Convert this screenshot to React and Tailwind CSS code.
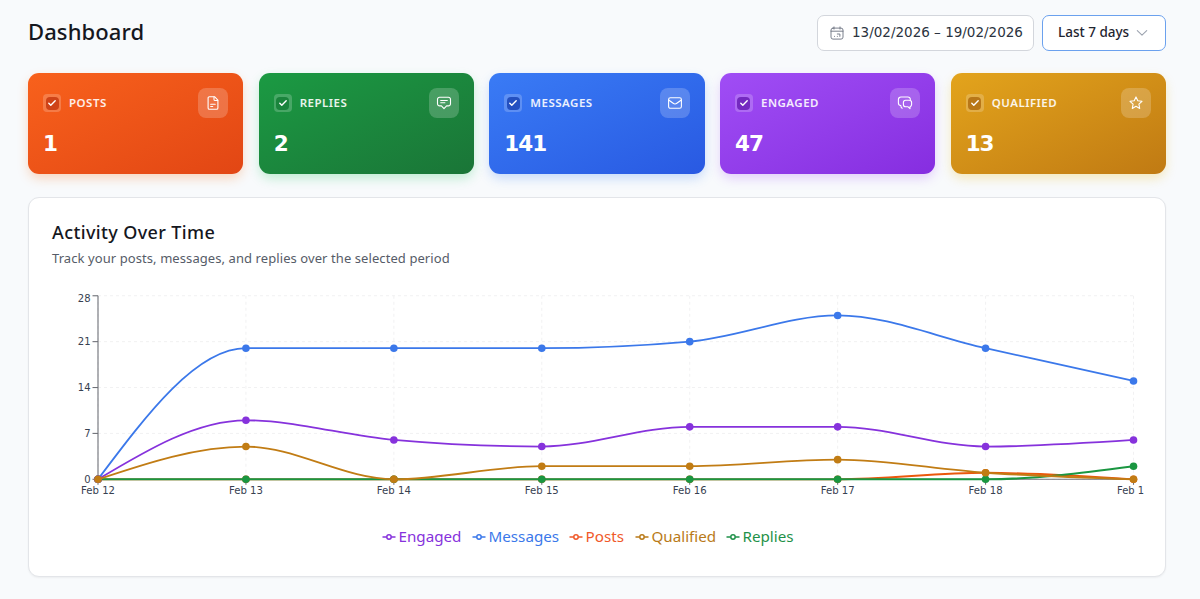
import React from 'react';
import clsx from 'clsx';

const stats = [
  { label: 'Posts', value: '1', icon: 'file', card: 'from-[#f8611c] to-[#e24614] shadow-[#f9731648]', check: 'bg-[#cf4318]' },
  { label: 'Replies', value: '2', icon: 'reply', card: 'from-[#1b9a43] to-[#1a7537] shadow-[#22c55e48]', check: 'bg-[#1a843c]' },
  { label: 'Messages', value: '141', icon: 'mail', card: 'from-[#3a7bf5] to-[#2959e2] shadow-[#3b82f648]', check: 'bg-[#2450c0]' },
  { label: 'Engaged', value: '47', icon: 'chats', card: 'from-[#a04df5] to-[#862de0] shadow-[#a855f748]', check: 'bg-[#7429c0]' },
  { label: 'Qualified', value: '13', icon: 'star', card: 'from-[#e3a41c] to-[#c07a13] shadow-[#eab30848]', check: 'bg-[#b87718]' },
];

const series = [
  { name: 'Posts', color: '#ea580c', data: [0, 0, 0, 0, 0, 0, 1, 0] },
  { name: 'Replies', color: '#1a9641', data: [0, 0, 0, 0, 0, 0, 0, 2] },
  { name: 'Messages', color: '#3b78ea', data: [0, 20, 20, 20, 21, 25, 20, 15] },
  { name: 'Engaged', color: '#8632dc', data: [0, 9, 6, 5, 8, 8, 5, 6] },
  { name: 'Qualified', color: '#c17c14', data: [0, 5, 0, 2, 2, 3, 1, 0] },
];

const legend = [
  { name: 'Engaged', color: '#8632dc', width: 63.5 },
  { name: 'Messages', color: '#3b78ea', width: 70.5 },
  { name: 'Posts', color: '#f0592a', width: 39.5 },
  { name: 'Qualified', color: '#b97a18', width: 64.5 },
  { name: 'Replies', color: '#1f9149', width: 52 },
];

const days = ['Feb 12', 'Feb 13', 'Feb 14', 'Feb 15', 'Feb 16', 'Feb 17', 'Feb 18', 'Feb 1'];
const ticks = [0, 7, 14, 21, 28];

const LEFT = 46;
const STEP = 147.93;
const BASE = 199.3;
const UNIT = 6.555;

const px = (i) => LEFT + i * STEP;
const py = (v) => BASE - v * UNIT;

// Monotone cubic interpolation through evenly spaced points
function monotonePath(values) {
  const n = values.length;
  const ys = values.map(py);
  const slopes = ys.slice(1).map((y, i) => (y - ys[i]) / STEP);
  const t = new Array(n).fill(0);
  for (let i = 1; i < n - 1; i++) {
    const a = slopes[i - 1];
    const b = slopes[i];
    t[i] = (Math.sign(a) + Math.sign(b)) * Math.min(Math.abs(a), Math.abs(b), 0.25 * Math.abs(a + b)) || 0;
  }
  t[0] = (3 * slopes[0] - t[1]) / 2;
  t[n - 1] = (3 * slopes[n - 2] - t[n - 2]) / 2;
  let d = `M${px(0)},${ys[0]}`;
  const k = STEP / 3;
  for (let i = 1; i < n; i++) {
    d += `C${px(i - 1) + k},${ys[i - 1] + k * t[i - 1]},${px(i) - k},${ys[i] - k * t[i]},${px(i)},${ys[i]}`;
  }
  return d;
}

function StatIcon({ name }) {
  return (
    <svg viewBox="0 0 16 16" className="w-4 h-4" fill="none" stroke="currentColor" strokeWidth="1.1" strokeLinecap="round" strokeLinejoin="round">
      {name === 'file' && (
        <>
          <path d="M9.5 1.7H4.4a1.3 1.3 0 0 0-1.3 1.3v10a1.3 1.3 0 0 0 1.3 1.3h7.2a1.3 1.3 0 0 0 1.3-1.3V5.2L9.5 1.7Z" />
          <path d="M9 2v2.4a1.1 1.1 0 0 0 1.1 1.1h2.6M5.7 9.3h4.5M5.7 11.5h2" />
        </>
      )}
      {name === 'reply' && (
        <>
          <path d="M3.6 2.3h8.8a2.1 2.1 0 0 1 2.1 2.1v4.4a2.1 2.1 0 0 1-2.1 2.1h-1.8L8 13.7l-2.6-2.8H3.6a2.1 2.1 0 0 1-2.1-2.1V4.4a2.1 2.1 0 0 1 2.1-2.1Z" />
          <path d="M4.7 5.5h6.6M4.7 7.8h4.2" />
        </>
      )}
      {name === 'mail' && (
        <>
          <rect x="1.6" y="2.7" width="12.8" height="10.6" rx="1.8" />
          <path d="M2 5.2l4.2 3.1a3 3 0 0 0 3.6 0L14 5.2" />
        </>
      )}
      {name === 'chats' && (
        <>
          <path d="M5.3 13.2c-1-.3-1.5-1.2-1.5-2.6a2.6 2.6 0 0 1-2.4-2.6V4.6A2.6 2.6 0 0 1 4 2h6.8a2.6 2.6 0 0 1 2.6 2.4" />
          <path d="M8.7 5.3h3.6a2.3 2.3 0 0 1 2.3 2.3v1.9a2.3 2.3 0 0 1-1.6 2.2v1.9l-1.9-1.8H8.7a2.3 2.3 0 0 1-2.3-2.3V7.6a2.3 2.3 0 0 1 2.3-2.3Z" />
        </>
      )}
      {name === 'star' && <path d="M8 1.9l1.8 3.9 4.2.5-3.1 2.9.8 4.2L8 11.3l-3.7 2.1.8-4.2L2 6.3l4.2-.5L8 1.9Z" />}
    </svg>
  );
}

function StatCard({ stat }) {
  return (
    <div className={clsx('h-[101px] rounded-[11px] bg-linear-to-br px-[15px] pt-[15px] text-white shadow-[0_5px_12px_-1px]', stat.card)}>
      <div className="flex items-center justify-between">
        <div className="flex items-center gap-2">
          <div className="flex h-[18px] w-[18px] items-center justify-center rounded-[4px] bg-white/20">
            <div className={clsx('flex h-[13px] w-[13px] items-center justify-center rounded-[4px]', stat.check)}>
              <svg viewBox="0 0 10 10" className="h-[10px] w-[10px]" fill="none" stroke="white" strokeWidth="1.4" strokeLinecap="round" strokeLinejoin="round">
                <path d="M1.8 5.2l2 2L8.2 2.8" />
              </svg>
            </div>
          </div>
          <span className="text-[11.5px] leading-4 font-semibold tracking-[0.5px] uppercase text-white/90">{stat.label}</span>
        </div>
        <div className="flex h-[30px] w-[30px] items-center justify-center rounded-lg bg-white/20">
          <StatIcon name={stat.icon} />
        </div>
      </div>
      <p className="mt-[11px] font-['DejaVu_Sans'] text-[21.5px] leading-[30px] font-bold tracking-[-1px]">{stat.value}</p>
    </div>
  );
}

function ActivityChart() {
  return (
    <svg viewBox="0 0 1092 230" className="block h-[230px] w-[1092px]">
      <g stroke="#f1f1f2" strokeDasharray="3 3">
        {ticks.map((v) => <line key={v} x1={LEFT} x2={px(7)} y1={py(v)} y2={py(v)} />)}
        {days.map((d, i) => <line key={d} x1={px(i)} x2={px(i)} y1={py(28)} y2={BASE} />)}
      </g>
      <g stroke="#6f7178" strokeWidth="1.1">
        <line x1={LEFT} x2={px(7)} y1={BASE} y2={BASE} />
        <line x1={LEFT} x2={LEFT} y1={py(28)} y2={BASE} />
        {ticks.map((v) => <line key={v} x1={LEFT - 5.5} x2={LEFT} y1={py(v)} y2={py(v)} />)}
        {days.map((d, i) => <line key={d} x1={px(i)} x2={px(i)} y1={BASE} y2={BASE + 5.5} />)}
      </g>
      <g className="font-['DejaVu_Sans']" fill="#374151" fontSize="10">
        {ticks.map((v) => (
          <text key={v} x={LEFT - 7.5} y={py(v) + (v === 28 ? 6.5 : 3.7)} textAnchor="end">{v}</text>
        ))}
        {days.map((d, i) => (
          <text key={d} x={i === 7 ? 1065 : px(i) - 17} y="214" textLength={i === 7 ? 27 : 34} lengthAdjust="spacingAndGlyphs">{d}</text>
        ))}
      </g>
      {series.map((s) => (
        <g key={s.name}>
          <path d={monotonePath(s.data)} fill="none" stroke={s.color} strokeWidth={s.name === 'Replies' ? 2.1 : 1.8} />
          {s.data.map((v, i) => <circle key={i} cx={px(i)} cy={py(v)} r="3.8" fill={s.color} />)}
        </g>
      ))}
    </svg>
  );
}

export default function App() {
  return (
    <div className="h-[599px] overflow-hidden bg-[#f8fafc] px-7 pt-[15px] font-['Noto_Sans',sans-serif] text-[#15171e]">
      <header className="flex h-9 items-center justify-between pr-[6px]">
        <h1 className="pb-[5px] text-[22px] leading-8 font-medium tracking-[0.1px]">Dashboard</h1>
        <div className="flex gap-2">
          <div className="flex h-9 w-[217px] items-center rounded-[7px] border border-[#d3d6dc] bg-white pl-3">
            <svg viewBox="0 0 14 14" className="mr-2 h-[14px] w-[14px] shrink-0" fill="none" stroke="#6b7280" strokeWidth="0.9" strokeLinecap="round">
              <rect x="1" y="2.1" width="12" height="11" rx="2" />
              <path d="M1 5.2h12M4 .9v2.2M10 .9v2.2M7.3 8h2.6v1.6M4.5 10.4h.1M7.3 10.4h.1M9.8 10.4h.1" />
            </svg>
            <span className="pb-[2px] font-['DejaVu_Sans'] text-[13.5px] whitespace-nowrap text-[#2b3340]">13/02/2026 – 19/02/2026</span>
          </div>
          <div className="flex h-9 w-[124px] items-center justify-between rounded-[7px] border border-[#6ba1ee] bg-white pr-[17px] pl-[15px]">
            <span className="pb-[2px] text-[13.5px] font-medium whitespace-nowrap text-[#1f2530]">Last 7 days</span>
            <svg viewBox="0 0 12 8" className="h-2 w-3" fill="none" stroke="#9ca3af" strokeWidth="1.1" strokeLinecap="round" strokeLinejoin="round">
              <path d="M1.3 1.7L6 6.2l4.7-4.5" />
            </svg>
          </div>
        </div>
      </header>

      <section className="mt-[22px] mr-[6px] grid grid-cols-5 gap-[15.3px]">
        {stats.map((stat) => <StatCard key={stat.label} stat={stat} />)}
      </section>

      <section className="mt-[23px] mr-[6px] h-[380px] rounded-[11px] border border-[#e3e5e9] bg-white px-[23px] pt-[22px] shadow-xs">
        <h2 className="text-[18px] leading-6 font-medium tracking-[0.38px]">Activity Over Time</h2>
        <p className="mt-1 text-[13px] leading-5 tracking-[0.08px] text-[#565c68]">Track your posts, messages, and replies over the selected period</p>
        <div className="mt-3">
          <ActivityChart />
        </div>
        <div className="mt-[14px] ml-[329.5px] flex gap-[9.5px] text-[15.2px] leading-6">
          {legend.map((item) => (
            <div key={item.name} className="flex items-center gap-[3px]" style={{ color: item.color }}>
              <svg viewBox="0 0 14 14" className="mt-[2px] h-[14px] w-[14px] shrink-0" fill="none" stroke="currentColor" strokeWidth="1.5">
                <path d="M.5 7h4.2M9.3 7h4.2" />
                <circle cx="7" cy="7" r="2.2" />
              </svg>
              <span className="whitespace-nowrap" style={{ width: item.width }}>{item.name}</span>
            </div>
          ))}
        </div>
      </section>
    </div>
  );
}
